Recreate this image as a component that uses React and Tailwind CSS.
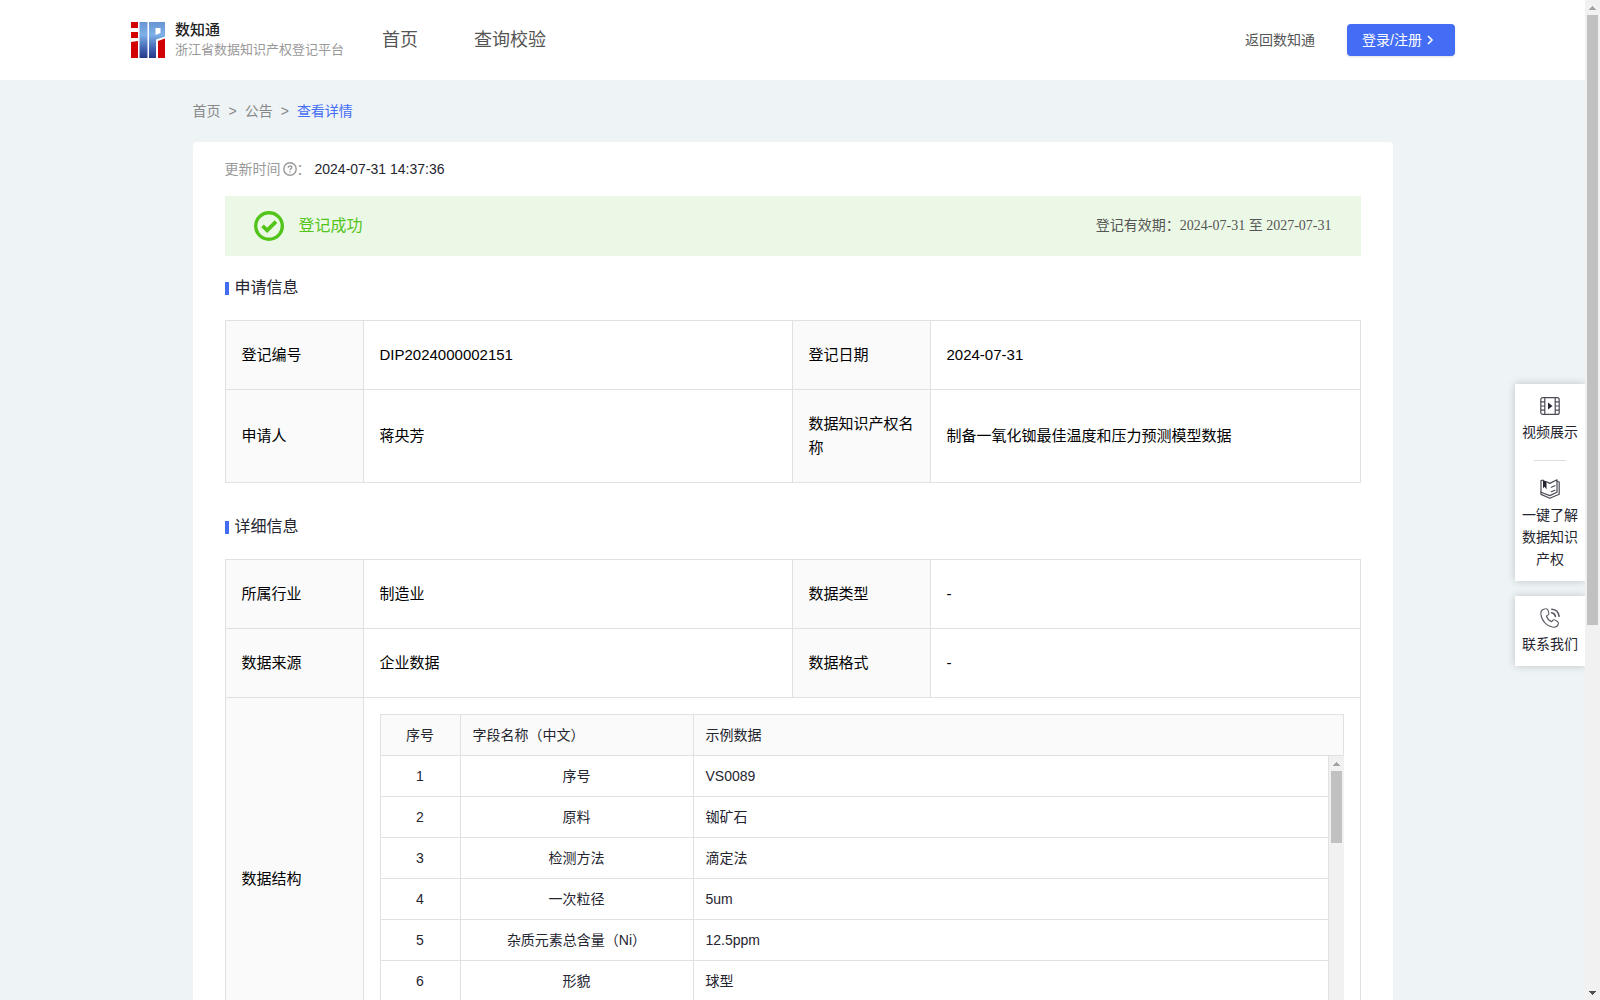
import React from "react";

const applyRows = [
  ["登记编号", "DIP2024000002151", "登记日期", "2024-07-31"],
  ["申请人", "蒋央芳", "数据知识产权名称", "制备一氧化铷最佳温度和压力预测模型数据"],
];

const detailRows = [
  ["所属行业", "制造业", "数据类型", "-"],
  ["数据来源", "企业数据", "数据格式", "-"],
];

const fields = [
  ["1", "序号", "VS0089"],
  ["2", "原料", "铷矿石"],
  ["3", "检测方法", "滴定法"],
  ["4", "一次粒径", "5um"],
  ["5", "杂质元素总含量（Ni）", "12.5ppm"],
  ["6", "形貌", "球型"],
];

function Logo() {
  return (
    <svg width="34" height="36" viewBox="0 0 34 36" aria-hidden="true">
      <defs>
        <linearGradient id="logoBlue" gradientUnits="userSpaceOnUse" x1="0" y1="0" x2="0" y2="36">
          <stop offset="0" stopColor="#6a94d2" />
          <stop offset="0.35" stopColor="#7db0e8" />
          <stop offset="0.75" stopColor="#3f62b0" />
          <stop offset="1" stopColor="#263a86" />
        </linearGradient>
      </defs>
      <path d="M0 0h7v6H0zM0 10h7v6H0zM0 20l7-1V36H0z" fill="#d20000" />
      <path d="M8.500 0h8v36h-8z" fill="url(#logoBlue)" />
      <path d="M18 0h16v14.500l-9 3V36h-7zM24.500 6v7l5-2V6z" fillRule="evenodd" fill="url(#logoBlue)" />
      <path d="M27 19l7-2.500V36h-7z" fill="#d20000" />
    </svg>
  );
}

function SectionTitle({ children }) {
  return (
    <h2 className="flex h-6 items-center gap-1.5 text-base text-[#252530]">
      <span className="h-[13px] w-1 bg-[#446df6]" />
      {children}
    </h2>
  );
}

function Columns() {
  return (
    <colgroup>
      <col className="w-[138px]" />
      <col />
      <col className="w-[138px]" />
      <col className="w-[430px]" />
    </colgroup>
  );
}

function InfoRows({ rows }) {
  return rows.map((row) => (
    <tr key={row[0]}>
      {row.map((text, i) =>
        i % 2 === 0 ? (
          <th key={i} scope="row" className="border border-[#e1e1e1] bg-[#fafafa] px-4 py-[22px] text-left font-normal">
            {text}
          </th>
        ) : (
          <td key={i} className="border border-[#e1e1e1] px-4 py-[22px]">
            {text}
          </td>
        )
      )}
    </tr>
  ));
}

function Arrow({ down, color }) {
  return (
    <svg width="15" height="15" viewBox="0 0 15 15" shapeRendering="crispEdges" aria-hidden="true">
      <path d={down ? "M4 6h7v1H4zM5 7h5v1H5zM6 8h3v1H6zM7 9h1v1H7z" : "M7 6h1v1H7zM6 7h3v1H6zM5 8h5v1H5zM4 9h7v1H4z"} fill={color} />
    </svg>
  );
}

function VideoIcon() {
  return (
    <svg width="20" height="20" viewBox="0 0 20 20" fill="none" stroke="#4b4b55" strokeWidth="1.200" aria-hidden="true">
      <rect x="0.800" y="1.600" width="18.400" height="16.800" rx="2" />
      <path d="M4.800 1.600v16.800M15.200 1.600v16.800M1 5.800h3.800M1 10h3.800M1 14.200h3.800M15.200 5.800H19M15.200 10H19M15.200 14.200H19" />
      <path d="M8 6.600v6.800l4.500-3.400z" fill="#252530" stroke="none" />
    </svg>
  );
}

function BookIcon() {
  return (
    <svg width="20" height="20" viewBox="0 0 20 20" fill="none" stroke="#4b4b55" strokeWidth="1.200" strokeLinejoin="round" strokeLinecap="round" aria-hidden="true">
      <path d="M3 1.200L1 1.600v13.800l8.800 3.900 9.400-4V3l-2.200-.8" />
      <path d="M6.500 2.800l3.300 1.600L17 .8v12.400l-7.200 3.400L1 13.200" />
      <path d="M11.300 8.200l3.600-1.500M11.300 12.700l3.600-1.500" />
      <path d="M3 1v8.200l1.700-1.400 1.800 2.600V2.600z" fill="#252530" stroke="none" />
    </svg>
  );
}

function PhoneIcon() {
  return (
    <svg width="20" height="20" viewBox="0 0 20 20" fill="none" stroke="#5b5b65" strokeWidth="1.100" strokeLinejoin="round" strokeLinecap="round" aria-hidden="true">
      <path d="M3.200 1.400C1.400 2 .7 4 .9 6c.5 6.500 5.600 12.400 12.400 13.200 2.400.2 4.200-.9 4.900-2.900.4-1.200.1-2.200-.8-2.800l-2.200-1.400c-1-.6-2-.4-2.700.5l-.9 1.200C8.900 12.600 7.200 10.600 6.400 8l1.400-.9c1-.7 1.300-1.600.9-2.700L8 2.200C7.600 1.100 6.800.7 5.800.8c-.9 0-1.800.3-2.600.6z" />
      <path d="M11.600 4.800c2 .3 3.400 1.600 3.800 3.600M11.800 1.200c4 .3 6.800 2.900 7.300 7.100" strokeWidth="1.600" />
    </svg>
  );
}

function SideLink({ icon, children }) {
  return (
    <a href="#" className="flex flex-col items-center gap-[5px] px-[7px] text-center text-sm leading-[22px] text-[#252530]">
      {icon}
      <span>{children}</span>
    </a>
  );
}

export default function App() {
  return (
    <div className="flex h-screen overflow-hidden bg-[#eef3f6] font-['Liberation_Sans','Noto_Sans_CJK_SC',sans-serif]">
      <div className="relative flex min-w-0 flex-1 flex-col overflow-hidden">
        <header className="flex h-20 shrink-0 items-center bg-white pr-[130px] pl-[131px] text-[#555555]">
          <a href="#" className="flex items-center gap-2.5">
            <Logo />
            <span className="flex flex-col">
              <span className="text-[15px] leading-5 font-medium text-[#222222]">数知通</span>
              <span className="text-[13px] leading-5 text-[#999999]">浙江省数据知识产权登记平台</span>
            </span>
          </a>
          <nav className="ml-[38px] flex gap-14 text-lg">
            <a href="#">首页</a>
            <a href="#">查询校验</a>
          </nav>
          <div className="ml-auto flex items-center gap-8 text-sm">
            <a href="#">返回数知通</a>
            <button type="button" className="flex h-8 w-[108px] items-center gap-0.5 rounded-sm bg-[#446df6] pl-[15px] text-sm text-white shadow-sm">
              登录/注册
              <svg width="12" height="12" viewBox="0 0 12 12" fill="none" stroke="currentColor" strokeWidth="1.600" aria-hidden="true">
                <path d="M4 2l4 4-4 4" />
              </svg>
            </button>
          </div>
        </header>

        <main className="mx-auto w-full max-w-[1200px]">
          <nav className="flex h-[62px] items-center gap-2 text-sm text-[#888888]">
            <a href="#">首页</a>
            <span>&gt;</span>
            <a href="#">公告</a>
            <span>&gt;</span>
            <a href="#" className="text-[#446df6]">查看详情</a>
          </nav>

          <div className="rounded bg-white px-8 pt-4 pb-8">
            <div className="flex h-[22px] items-center text-sm text-[#999999]">
              更新时间
              <svg className="ml-0.5" width="14" height="14" viewBox="0 0 14 14" fill="none" stroke="#999999" strokeWidth="1.400" aria-hidden="true">
                <circle cx="7" cy="7" r="6.200" />
                <path d="M5.200 5.700c0-2.300 3.600-2.300 3.600-.2 0 1.300-1.800 1.300-1.800 2.700M7 9.300v1.200" />
              </svg>
              ：
              <span className="ml-1 text-[#252530]">2024-07-31 14:37:36</span>
            </div>

            <div className="mt-4 flex h-[60px] items-center bg-[#ecf8e6] px-[29px]">
              <svg width="30" height="30" viewBox="0 0 30 30" fill="none" stroke="#52c41a" aria-hidden="true">
                <circle cx="15" cy="15" r="13.300" strokeWidth="3.400" />
                <path d="M8.500 14.800l4.700 4.600 8.800-8.800" strokeWidth="3.800" />
              </svg>
              <span className="ml-[15px] text-base text-[#52c41a]">登记成功</span>
              <span className="ml-auto font-['Liberation_Serif','Noto_Sans_CJK_SC',serif] text-sm text-[#555555]">
                登记有效期：2024-07-31 至 2027-07-31
              </span>
            </div>

            <div className="mt-5">
              <SectionTitle>申请信息</SectionTitle>
            </div>
            <table className="mt-5 w-full table-fixed border-collapse text-[15px] leading-6 text-black">
              <Columns />
              <tbody>
                <InfoRows rows={applyRows} />
              </tbody>
            </table>

            <div className="mt-8">
              <SectionTitle>详细信息</SectionTitle>
            </div>
            <table className="mt-5 w-full table-fixed border-collapse text-[15px] leading-6 text-black">
              <Columns />
              <tbody>
                <InfoRows rows={detailRows} />
                <tr>
                  <th scope="row" className="border border-[#e1e1e1] bg-[#fafafa] px-4 text-left font-normal">
                    数据结构
                  </th>
                  <td colSpan={3} className="border border-[#e1e1e1] p-4">
                    <table className="w-full table-fixed border-collapse text-sm leading-5 text-[#252530]">
                      <colgroup>
                        <col className="w-20" />
                        <col className="w-[233px]" />
                        <col />
                      </colgroup>
                      <thead>
                        <tr>
                          <th scope="col" className="border border-[#e1e1e1] bg-[#fafafa] px-3 py-2.5 font-normal">序号</th>
                          <th scope="col" className="border border-[#e1e1e1] bg-[#fafafa] px-3 py-2.5 text-left font-normal">字段名称（中文）</th>
                          <th scope="col" className="border border-[#e1e1e1] bg-[#fafafa] px-3 py-2.5 text-left font-normal">示例数据</th>
                        </tr>
                      </thead>
                    </table>
                    <div className="flex h-[288px]">
                      <div className="min-w-0 flex-1">
                        <table className="w-full table-fixed border-collapse text-sm leading-5 text-[#252530]">
                          <colgroup>
                            <col className="w-20" />
                            <col className="w-[233px]" />
                            <col />
                          </colgroup>
                          <tbody>
                            {fields.map(([no, name, sample]) => (
                              <tr key={no}>
                                <td className="border border-t-0 border-[#e1e1e1] px-3 py-2.5 text-center">{no}</td>
                                <td className="border border-t-0 border-[#e1e1e1] px-3 py-2.5 text-center">{name}</td>
                                <td className="border border-t-0 border-[#e1e1e1] px-3 py-2.5">{sample}</td>
                              </tr>
                            ))}
                          </tbody>
                        </table>
                      </div>
                      <div className="flex w-[15px] shrink-0 flex-col items-center bg-[#f1f1f1]">
                        <Arrow color="#a3a3a3" />
                        <div className="h-[72px] w-[11px] bg-[#c1c1c1]" />
                      </div>
                    </div>
                  </td>
                </tr>
              </tbody>
            </table>
          </div>
        </main>

        <aside className="absolute top-96 right-0 flex w-[70px] flex-col gap-[15px]">
          <div className="flex flex-col items-center bg-white pt-3 pb-[11px] shadow-[0_0_8px_rgba(0,0,0,0.2)]">
            <SideLink icon={<VideoIcon />}>视频展示</SideLink>
            <div className="mt-[17px] mb-[18px] h-px w-8 bg-[#dddddd]" />
            <SideLink icon={<BookIcon />}>一键了解数据知识产权</SideLink>
          </div>
          <div className="bg-white pt-3 pb-[11px] shadow-[0_0_8px_rgba(0,0,0,0.2)]">
            <SideLink icon={<PhoneIcon />}>联系我们</SideLink>
          </div>
        </aside>
      </div>

      <div className="flex w-[15px] shrink-0 flex-col items-center bg-[#f1f1f1]">
        <Arrow color="#a3a3a3" />
        <div className="h-[61%] w-[11px] bg-[#c1c1c1]" />
        <div className="mt-auto">
          <Arrow down color="#505050" />
        </div>
      </div>
    </div>
  );
}
